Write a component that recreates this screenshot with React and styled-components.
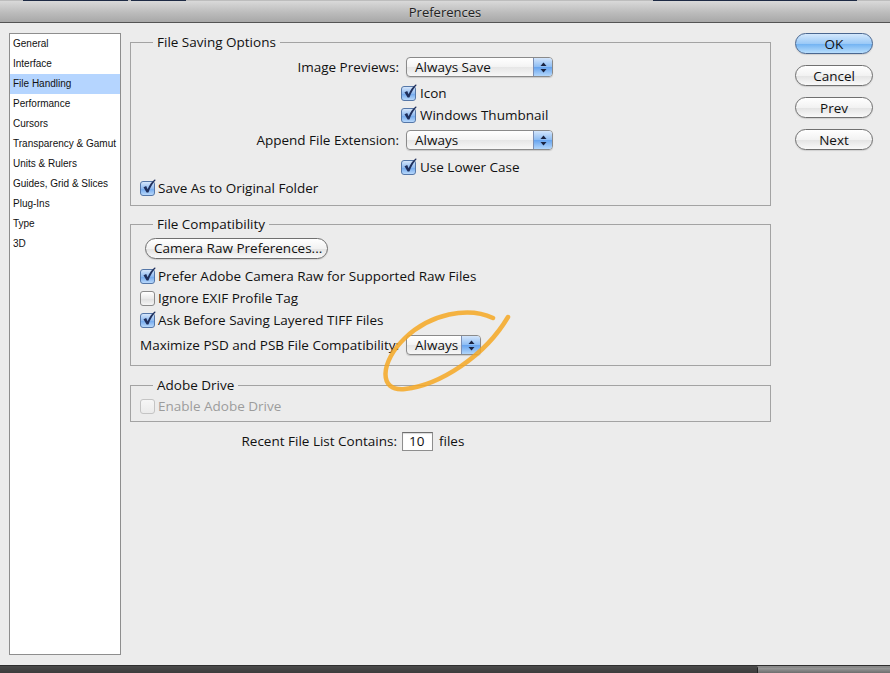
import React from "react";
import styled, { createGlobalStyle, css } from "styled-components";

const GlobalStyle = createGlobalStyle`
  html, body {
    margin: 0;
    padding: 0;
    background: #ececec;
  }
  body {
    font-family: "Open Sans", "DejaVu Sans", sans-serif;
    font-size: 13.5px;
    color: #111;
  }
`;

const Window = styled.div`
  position: relative;
  width: 890px;
  height: 673px;
  display: flex;
  flex-direction: column;
  background: #ececec;
  overflow: hidden;
`;

const TopStrip = styled.div`
  height: 1px;
  display: flex;
  background: #bdbdbd;
`;

const StripSeg = styled.span`
  width: ${(p) => p.w}px;
  margin-left: ${(p) => p.ml}px;
  background: ${(p) => p.color || "#1d2a44"};
`;

const TitleBar = styled.div`
  height: 21px;
  border-bottom: 1px solid #545454;
  background: linear-gradient(#d9d9d9, #bcbcbc 55%, #a8a8a8);
  display: flex;
  align-items: center;
  justify-content: center;
  font-size: 13px;
  color: #222;
  text-shadow: 0 1px 0 rgba(255, 255, 255, 0.35);
`;

const Body = styled.div`
  flex: 1;
  display: flex;
  padding: 10px 0 10px 9px;
`;

const Sidebar = styled.ul`
  list-style: none;
  margin: 0;
  padding: 0;
  width: 110px;
  background: #fff;
  border: 1px solid #8e8e8e;
  font-family: "Liberation Sans", Arial, sans-serif;
  font-size: 10px;
`;

const NavItem = styled.li`
  height: 20px;
  line-height: 20px;
  padding-left: 3px;
  white-space: nowrap;
  ${(p) =>
    p.active &&
    css`
      background: #b5d5ff;
    `}
`;

const Main = styled.div`
  width: 641px;
  margin-left: 9px;
  padding-top: 1px;
  display: flex;
  flex-direction: column;
`;

const Group = styled.fieldset`
  margin: ${(p) => p.mt || 0}px 0 0 0;
  padding: 0 0 ${(p) => p.pb}px 9px;
  border: 1px solid #a3a3a3;
  min-width: 0;
`;

const Legend = styled.legend`
  margin-left: 13px;
  padding: 0 4px;
  font-size: 13.5px;
  line-height: 16px;
`;

const Row = styled.div`
  display: flex;
  align-items: center;
  height: 20px;
  margin-top: ${(p) => p.mt || 0}px;
  padding-left: ${(p) => p.indent || 0}px;
  white-space: nowrap;
`;

const Label = styled.span`
  width: ${(p) => p.w}px;
  flex: none;
  text-align: right;
  margin-right: ${(p) => p.gap}px;
  white-space: nowrap;
`;

const CheckLabel = styled.label`
  display: flex;
  align-items: center;
  gap: ${(p) => p.gap}px;
  color: ${(p) => (p.disabled ? "#9c9c9c" : "#111")};
`;

const Box = styled.span`
  position: relative;
  width: 13px;
  height: 13px;
  border-radius: 3px;
  flex: none;
  ${(p) =>
    p.checked
      ? css`
          border: 1px solid #5577a8;
          background: linear-gradient(#d5e6fb, #8fbaf0 50%, #6ea6ec 51%, #b8d8fb);
        `
      : css`
          border: 1px solid ${p.disabled ? "#c4c4c4" : "#8b8b8b"};
          background: ${p.disabled
            ? "linear-gradient(#f6f6f6, #ebebeb)"
            : "linear-gradient(#ffffff, #e9e9e9 50%, #dedede 51%, #f5f5f5)"};
        `}
`;

const Tick = styled.svg`
  position: absolute;
  left: 1px;
  top: -3px;
  width: 14px;
  height: 15px;
  overflow: visible;
`;

const Popup = styled.span`
  display: inline-flex;
  align-items: stretch;
  width: ${(p) => p.w}px;
  height: 20px;
  box-sizing: border-box;
  border: 1px solid #8a8a8a;
  border-radius: 4px;
  margin-left: ${(p) => p.ml || 0}px;
  background: linear-gradient(#ffffff, #f3f3f3 50%, #e6e6e6 51%, #f7f7f7);
  box-shadow: 0 1px 1px rgba(0, 0, 0, 0.15);
  overflow: hidden;
`;

const PopupText = styled.span`
  flex: 1;
  padding-left: 8px;
  line-height: 18px;
`;

const PopupArrows = styled.span`
  width: 18px;
  display: flex;
  align-items: center;
  justify-content: center;
  border-left: 1px solid #7b8fb5;
  background: linear-gradient(#d3e5fb, #8cbcf3 50%, #66a3ee 51%, #b2d6fb);
`;

const PushButton = styled.button`
  height: 21px;
  border-radius: 11px;
  border: 1px solid ${(p) => (p.primary ? "#4a6790" : "#707070")};
  background: ${(p) =>
    p.primary
      ? "linear-gradient(#d4e8fc, #9ccaf7 50%, #6fb1f2 51%, #b9defc)"
      : "linear-gradient(#ffffff, #f2f2f2 50%, #e3e3e3 51%, #f9f9f9)"};
  font-family: inherit;
  font-size: 13.5px;
  color: #111;
  padding: 0 8px;
  width: ${(p) => (p.w ? `${p.w}px` : "100%")};
  margin-left: ${(p) => p.ml || 0}px;
  line-height: 18px;
  box-shadow: 0 1px 1px rgba(0, 0, 0, 0.12);
`;

const ButtonCol = styled.div`
  width: 78px;
  margin-left: 24px;
  display: flex;
  flex-direction: column;
  gap: 11px;
`;

const TextField = styled.span`
  width: 31px;
  height: 19px;
  box-sizing: border-box;
  border: 1px solid #8e8e8e;
  border-top-color: #6e6e6e;
  background: #fff;
  box-shadow: inset 0 1px 1px rgba(0, 0, 0, 0.15);
  padding-left: 6px;
  line-height: 17px;
`;

const Unit = styled.span`
  margin-left: 6px;
`;

const BottomBar = styled.div`
  height: 7px;
  display: flex;
  border-top: 1px solid #2e2e2e;
`;

const BottomDark = styled.div`
  flex: 1;
  background: linear-gradient(#4a4a4a, #3c3c3c);
`;

const BottomLight = styled.div`
  width: 132px;
  border-left: 1px solid #222;
  border-top: 2px solid #8a8a8a;
  background: linear-gradient(#9a9a9a, #6e6e6e);
`;

const Scribble = styled.svg`
  position: absolute;
  left: 0;
  top: 0;
  pointer-events: none;
`;

const Check = ({ checked, disabled, gap = 3, children }) => (
  <CheckLabel disabled={disabled} gap={gap}>
    <Box checked={checked} disabled={disabled}>
      {checked && (
        <Tick viewBox="0 0 14 15">
          <path
            d="M1.5 8.2 L4.2 7 L5.6 10.2 C7.4 6 9.6 2.6 13 0.2 L13.6 1.2 C10.8 4 8.4 8 6.4 13.6 L4.6 13.6 Z"
            fill="#1f2f5c"
          />
        </Tick>
      )}
    </Box>
    {children}
  </CheckLabel>
);

const Select = ({ w, ml, value }) => (
  <Popup w={w} ml={ml}>
    <PopupText>{value}</PopupText>
    <PopupArrows>
      <svg width="7" height="11" viewBox="0 0 7 11">
        <path d="M3.5 0.5 L6.5 4 L0.5 4 Z" fill="#1a2340" />
        <path d="M3.5 10.5 L6.5 7 L0.5 7 Z" fill="#1a2340" />
      </svg>
    </PopupArrows>
  </Popup>
);

const navItems = [
  "General",
  "Interface",
  "File Handling",
  "Performance",
  "Cursors",
  "Transparency & Gamut",
  "Units & Rulers",
  "Guides, Grid & Slices",
  "Plug-Ins",
  "Type",
  "3D",
];

const App = () => {
  return (
    <Window>
      <GlobalStyle />
      <TopStrip>
        <StripSeg w={105} ml={23} />
        <StripSeg w={55} ml={3} />
        <StripSeg w={204} ml={467} />
      </TopStrip>
      <TitleBar>Preferences</TitleBar>
      <Body>
        <Sidebar>
          {navItems.map((item) => (
            <NavItem key={item} active={item === "File Handling"}>
              {item}
            </NavItem>
          ))}
        </Sidebar>

        <Main>
          <Group pb={7}>
            <Legend>File Saving Options</Legend>
            <Row mt={7}>
              <Label w={259} gap={2}>Image Previews:</Label>
              <Select w={147} ml={5} value="Always Save" />
            </Row>
            <Row mt={6} indent={261}>
              <Check checked gap={4}>Icon</Check>
            </Row>
            <Row mt={2} indent={261}>
              <Check checked gap={4}>Windows Thumbnail</Check>
            </Row>
            <Row mt={5}>
              <Label w={259} gap={2}>Append File Extension:</Label>
              <Select w={147} ml={5} value="Always" />
            </Row>
            <Row mt={7} indent={261}>
              <Check checked gap={4}>Use Lower Case</Check>
            </Row>
            <Row mt={1}>
              <Check checked>Save As to Original Folder</Check>
            </Row>
          </Group>

          <Group mt={10} pb={10}>
            <Legend>File Compatibility</Legend>
            <Row mt={6}>
              <PushButton w={183} ml={5}>
                Camera Raw Preferences...
              </PushButton>
            </Row>
            <Row mt={8}>
              <Check checked>Prefer Adobe Camera Raw for Supported Raw Files</Check>
            </Row>
            <Row mt={2}>
              <Check>Ignore EXIF Profile Tag</Check>
            </Row>
            <Row mt={2}>
              <Check checked>Ask Before Saving Layered TIFF Files</Check>
            </Row>
            <Row mt={5}>
              <Label w={259} gap={2}>
                Maximize PSD and PSB File Compatibility:
              </Label>
              <Select w={75} ml={5} value="Always" />
            </Row>
          </Group>

          <Group mt={11} pb={5}>
            <Legend>Adobe Drive</Legend>
            <Row mt={3}>
              <Check disabled>Enable Adobe Drive</Check>
            </Row>
          </Group>

          <Row mt={9}>
            <Label w={267} gap={5}>Recent File List Contains:</Label>
            <TextField>10</TextField>
            <Unit>files</Unit>
          </Row>
        </Main>

        <ButtonCol>
          <PushButton primary>OK</PushButton>
          <PushButton>Cancel</PushButton>
          <PushButton>Prev</PushButton>
          <PushButton>Next</PushButton>
        </ButtonCol>
      </Body>
      <BottomBar>
        <BottomDark />
        <BottomLight />
      </BottomBar>

      <Scribble width="890" height="673" viewBox="0 0 890 673">
        <path
          d="M493 318 C468 306 430 314 405 338 C380 362 378 392 405 389 C440 385 485 356 508 317"
          fill="none"
          stroke="#f6a823"
          strokeOpacity="0.85"
          strokeWidth="4.5"
          strokeLinecap="round"
        />
      </Scribble>
    </Window>
  );
};

export default App;
